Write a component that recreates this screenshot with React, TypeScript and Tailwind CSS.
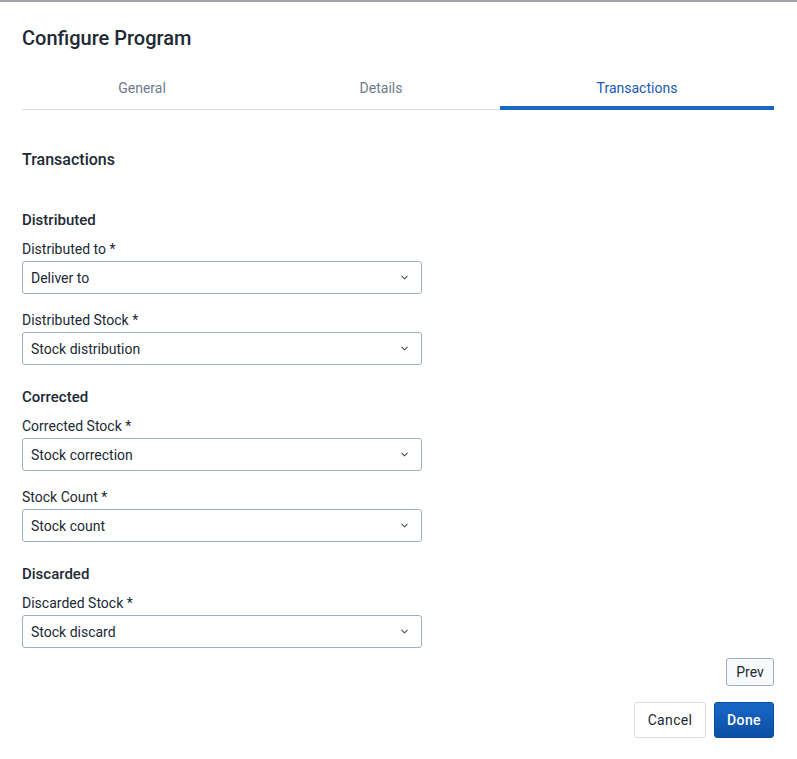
import { ChevronDown } from 'lucide-react'

const tabs = [
  { name: 'General', width: 'w-[240px]', active: false },
  { name: 'Details', width: 'w-[238px]', active: false },
  { name: 'Transactions', width: 'w-[274px]', active: true },
]

const sections = [
  {
    title: 'Distributed',
    fields: [
      { label: 'Distributed to *', value: 'Deliver to' },
      { label: 'Distributed Stock *', value: 'Stock distribution' },
    ],
  },
  {
    title: 'Corrected',
    fields: [
      { label: 'Corrected Stock *', value: 'Stock correction' },
      { label: 'Stock Count *', value: 'Stock count' },
    ],
  },
  {
    title: 'Discarded',
    fields: [{ label: 'Discarded Stock *', value: 'Stock discard' }],
  },
]

function SelectField({ label, value }: { label: string; value: string }) {
  return (
    <div className="flex flex-col">
      <label className="text-sm leading-5 text-[#212934]">{label}</label>
      <div className="mt-[2px] flex h-[33px] w-[400px] items-center justify-between rounded-[3px] border border-[#a0adba] bg-white pl-[8px] pr-[11px]">
        <span className="text-sm text-[#212934]">{value}</span>
        <ChevronDown className="h-[11px] w-[11px] text-[#404b5a]" strokeWidth={2.2} />
      </div>
    </div>
  )
}

export default function App() {
  return (
    <div className="min-h-[759px] w-[797px] border-t-2 border-[#a0a4a8] bg-white pl-[22px] pr-[23px] font-['Roboto',sans-serif]">
      {/* Header */}
      <h1 className="pt-[22px] text-xl leading-7 font-medium text-[#212934]">Configure Program</h1>

      {/* Tabs */}
      <div className="mt-[16px] flex">
        {tabs.map((tab) => (
          <div key={tab.name} className={`flex flex-col ${tab.width}`}>
            <div
              className={`flex h-[38px] items-center justify-center pt-[2px] text-sm ${
                tab.active ? 'text-[#1a57b4]' : 'text-[#6e7a8a]'
              }`}
            >
              {tab.name}
            </div>
            {tab.active ? (
              <div className="h-[4px] bg-[#1a66c4]" />
            ) : (
              <div className="mt-[3px] h-px bg-[#d5dde5]" />
            )}
          </div>
        ))}
      </div>

      {/* Body */}
      <h2 className="mt-[38px] text-base leading-6 font-medium text-[#212934]">Transactions</h2>

      <div className="mt-[38px] flex flex-col gap-[22px]">
        {sections.map((section) => (
          <div key={section.title} className="flex flex-col">
            <h3 className="text-[15px] leading-5 font-medium text-[#212934]">{section.title}</h3>
            <div className="mt-[9px] flex flex-col gap-[16px]">
              {section.fields.map((f) => (
                <SelectField key={f.label} label={f.label} value={f.value} />
              ))}
            </div>
          </div>
        ))}
      </div>

      {/* Footer */}
      <div className="mt-[10px] flex justify-end">
        <button className="h-[28px] w-[48px] rounded-[3px] border border-[#a0adba] bg-[#f8f9fa] text-sm text-[#212934]">
          Prev
        </button>
      </div>
      <div className="mt-[16px] flex justify-end gap-[8px]">
        <button className="h-[36px] w-[72px] rounded-[3px] border border-[#d5dde5] bg-white text-sm tracking-wide text-[#212934]">
          Cancel
        </button>
        <button className="h-[36px] w-[60px] rounded-[3px] border border-[#0b4a9e] bg-gradient-to-b from-[#1867c8] to-[#0b4fa3] text-sm font-medium tracking-wide text-white">
          Done
        </button>
      </div>
    </div>
  )
}
